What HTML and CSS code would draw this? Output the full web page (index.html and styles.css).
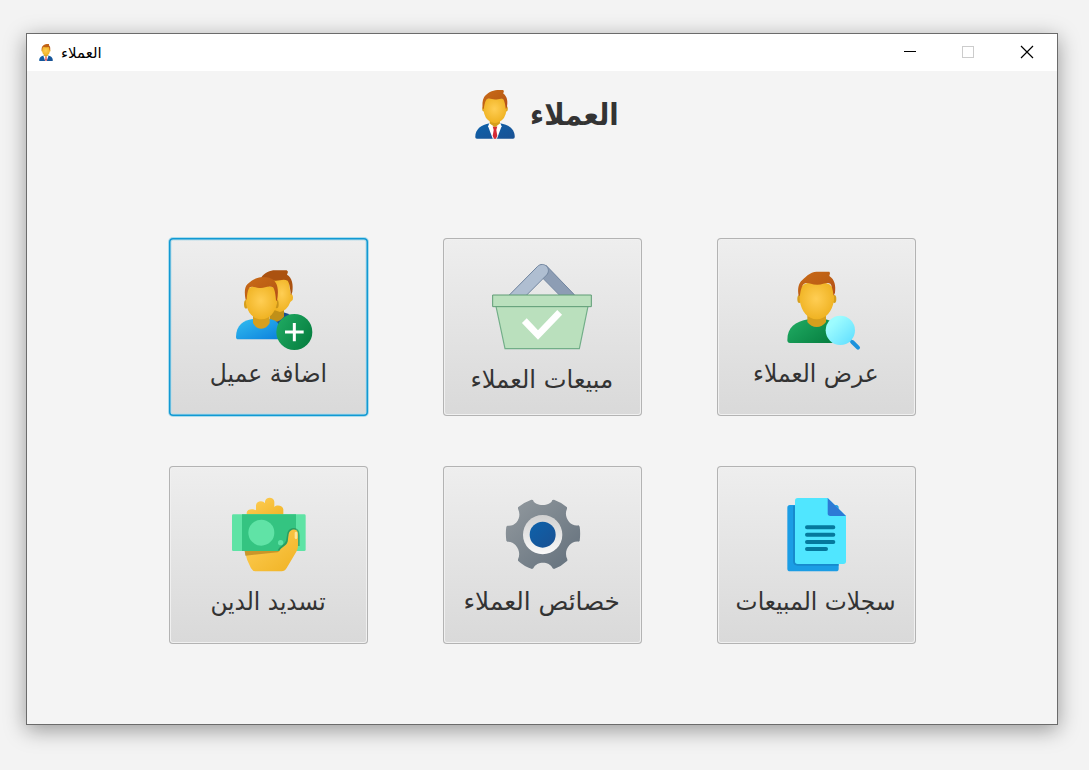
FILE: index.html
```html
<!DOCTYPE html>
<html lang="ar">
<head>
<meta charset="utf-8">
<title>العملاء</title>
<link rel="stylesheet" href="styles.css">
</head>
<body>
<svg class="defs" width="0" height="0">
  <defs>
    <radialGradient id="face" cx=".48" cy=".45" r=".6"><stop offset="0" stop-color="#ffce54"/><stop offset="1" stop-color="#eeb01e"/></radialGradient>
    <linearGradient id="hair" x1="0" y1="0" x2="1" y2="1"><stop offset="0" stop-color="#c96a18"/><stop offset=".55" stop-color="#bd5f14"/><stop offset="1" stop-color="#b34a1a"/></linearGradient>
    <linearGradient id="navy" x1="0" y1="0" x2="1" y2="1"><stop offset="0" stop-color="#0d62ab"/><stop offset="1" stop-color="#1a5193"/></linearGradient>
    <linearGradient id="sky" x1="0" y1="0" x2="1" y2="1"><stop offset="0" stop-color="#33bef0"/><stop offset="1" stop-color="#0a7fdc"/></linearGradient>
    <linearGradient id="green" x1="0" y1="0" x2="1" y2=".6"><stop offset="0" stop-color="#21ad64"/><stop offset="1" stop-color="#088142"/></linearGradient>
    <linearGradient id="lens" x1="0" y1="0" x2="1" y2="1"><stop offset=".25" stop-color="#9dfcff"/><stop offset="1" stop-color="#5cdcff"/></linearGradient>
    <linearGradient id="hand" x1="0" y1="0" x2="1" y2="1"><stop offset="0" stop-color="#ffd05a"/><stop offset="1" stop-color="#f0b222"/></linearGradient>
    <linearGradient id="steel" x1="0" y1="0" x2="1" y2="1"><stop offset="0" stop-color="#939a9f"/><stop offset="1" stop-color="#626f7b"/></linearGradient>
    <linearGradient id="ring" x1="0" y1="0" x2="0" y2="1"><stop offset="0" stop-color="#d0d0d0"/><stop offset="1" stop-color="#fafafa"/></linearGradient>
    <symbol id="businessman" viewBox="45 29 120 149">
      <path fill="url(#navy)" d="M45 172c0-24 17-37 44-42h32c27 5 44 18 44 42q0 5-5 5H50q-5 0-5-5z"/>
      <path fill="#fff" d="M88 129l-4 10 14 38h13l14-38-4-10z"/>
      <path fill="#d52b35" d="M98 140h14l-3 11 3 17-4 9h-6l-4-9 3-17z"/>
      <path fill="#d69f1d" d="M89 115h31v16l-15 11-16-11z"/>
      <ellipse cx="70" cy="86" rx="4" ry="8" fill="#d69f1d"/><ellipse cx="140" cy="86" rx="4" ry="8" fill="#d69f1d"/>
      <path fill="url(#face)" d="M70 70q2-18 35-18t35 18v20q-3 29-24 37-11 4-22 0-21-8-24-37z"/>
      <path fill="url(#hair)" d="M68 86C66 74 66 60 72 50C82 38 96 30 112 29L130 29L132 33L130 40C144 50 144 68 141 82L138 87C137 77 134 62 130 57C122 53 114 58 105 58C96 58 88 52 80 57C75 62 72 76 71 86Z"/>
    </symbol>
  </defs>
</svg>
<main class="window">
  <header class="titlebar">
    <svg class="app-icon"><use href="#businessman"/></svg>
    <span class="app-name" dir="rtl">العملاء</span>
    <svg class="controls" viewBox="0 0 140 18" shape-rendering="crispEdges">
      <path d="M7 8.500h12" stroke="#000"/>
      <rect x="65.500" y="3.500" width="11" height="11" fill="none" stroke="#ccc"/>
      <path d="M124 3l12 12M136 3l-12 12" stroke="#000" stroke-width="1.200" shape-rendering="auto"/>
    </svg>
  </header>
  <div class="heading">
    <svg class="heading-icon"><use href="#businessman"/></svg>
    <h1 class="heading-text" dir="rtl"><span class="fit fit-title">العملاء</span></h1>
  </div>
  <div class="grid">
    <button class="tile tile-focused">
      <svg class="art" viewBox="27 24 597 360">
        <path fill="#174f91" d="M345 247c25-3 43 3 55 16v50h-60z"/>
        <path fill="#c09018" d="M330 235h42v25q-20 24-42 10z"/>
        <path fill="url(#face)" d="M335 145h51l5 45q11 5 7 20l-7 6q-9 25-31 30l-20-7z"/>
        <path fill="#ab5210" d="M303 143C315 128 330 121 345 121L380 121 384 125 381 134C397 143 400 165 397 186L393 196C391 182 389 160 383 152C370 146 358 153 345 152Z"/>
        <path fill="url(#sky)" d="M228 320c1-34 20-50 55-54h42c30 4 40 20 40 62H235q-7 0-7-8z"/>
        <path fill="#d69f1d" d="M279 255h50v24q-9 17-25 17t-25-17z"/>
        <ellipse cx="258" cy="223" rx="6" ry="13" fill="#d69f1d"/><ellipse cx="350" cy="222" rx="6" ry="13" fill="#c8931a"/>
        <path fill="url(#face)" d="M258 190q2-24 46-24t47 24v30c-5 26-21 48-47 48s-42-22-46-48z"/>
        <path fill="url(#hair)" d="M257 210C253 190 253 172 262 163C275 150 290 143 302 142C325 140 342 145 348 160C355 172 355 190 351 213L348 211C347 196 345 180 339 172C325 166 315 174 303 174C288 174 276 166 268 173C262 182 261 196 260 208Z"/>
        <circle cx="403" cy="306" r="54" fill="url(#green)"/><path d="M403 279v55M375 306h56" stroke="#fff" stroke-width="9"/>
      </svg>
      <span class="label" dir="rtl"><span class="fit fit-add">اضافة عميل</span></span>
    </button>
    <button class="tile tile-low">
      <svg class="art" viewBox="24 24 597 360">
        <g stroke="#71859f" stroke-width="3">
          <path fill="#8d9db4" d="M309 130l24-24 84 87v12h-34z"/>
          <path fill="#afbed1" d="M222 196l86-87c8-8 20-7 27 0 7 8 7 18 0 26l-66 66z"/>
        </g>
        <path d="M183 229h276l-26 127H210z" fill="#bae0bd" stroke="#72ae88" stroke-width="3.500"/>
        <path d="M173 195h296v35H173z" fill="#bae0bd" stroke="#5e9c75" stroke-width="3"/>
        <path d="M268 272l41 43 65-68" fill="none" stroke="#fff" stroke-width="20"/>
      </svg>
      <span class="label" dir="rtl"><span class="fit fit-sales">مبيعات العملاء</span></span>
    </button>
    <button class="tile">
      <svg class="art" viewBox="21 24 597 360">
        <path fill="url(#green)" d="M232 330c0-37 23-55 63-62h50c25 5 42 20 42 71H240q-8 0-8-9z"/>
        <path fill="#d69f1d" d="M292 254h56v22q-11 15-28 15t-28-15z"/>
        <ellipse cx="268" cy="207" rx="6" ry="12" fill="#d69f1d"/><ellipse cx="373" cy="207" rx="6" ry="12" fill="#d69f1d"/>
        <path fill="url(#face)" d="M269 184q3-28 51-28t52 28v27c-5 34-25 57-52 57s-46-23-51-57z"/>
        <path fill="url(#hair)" d="M266 197C263 180 264 165 273 154C283 144 300 125 320 125L358 125 360 129 358 138C374 148 378 168 375 188L371 197C369 184 366 167 361 161C350 155 340 164 322 164C300 164 292 154 281 162C274 170 271 186 270 197Z"/>
        <path d="M420 330l5 5" stroke="#4daee7" stroke-width="9"/><path d="M427 336l17 17" stroke="#1b91dc" stroke-width="12" stroke-linecap="round"/>
        <circle cx="391" cy="301" r="44" fill="url(#lens)"/>
      </svg>
      <span class="label" dir="rtl"><span class="fit fit-view">عرض العملاء</span></span>
    </button>
    <button class="tile">
      <svg class="art" viewBox="27 18 597 360">
        <path fill="url(#hand)" d="M260 180V158C261 146 279 145 288 151V136C289 121 310 120 315 130V125C316 109 342 109 343 125V141C351 132 369 137 370 148V180Z"/>
        <path fill="#5fe3a5" d="M220 163h213q4 0 4 4v102q0 4-4 4H220q-4 0-4-4V167q0-4 4-4z"/>
        <path fill="#34c481" d="M246 163h162v110H246z"/>
        <circle cx="304" cy="218" r="39" fill="#60e3a6"/><circle cx="362" cy="248" r="8" fill="#60e3a6"/>
        <path fill="none" stroke="#207b49" stroke-opacity=".55" stroke-width="6" d="M356 272C362 258 378 256 381 243L385 220C388 207 404 203 412 211Q417 216 416 240V258"/>
        <path fill="url(#hand)" d="M254 273H358C363 261 380 258 383 245L386 222C389 205 414 203 414 222V259Q414 267 409 275L380 324Q374 334 365 334H287Q278 334 273 325Q260 302 254 273Z"/>
        <path fill="#b88721" opacity=".75" d="M254 273h104l-5 4-97 10z"/>
        <path stroke="#ffe59a" stroke-width="8" stroke-linecap="round" d="M408 219v14"/>
      </svg>
      <span class="label" dir="rtl"><span class="fit fit-pay">تسديد الدين</span></span>
    </button>
    <button class="tile">
      <svg class="art" viewBox="24 18 597 360">
        <path fill="url(#steel)" d="M249 142q17-15 40-23l5 1c5 20 53 20 58 0l5-1q23 8 39 23v4c-12 25 11 56 35 50l3 4q3 20 0 43l-4 2c-25-3-46 29-33 53v4q-18 17-40 25l-4-2c-10-22-48-22-58 0l-4 2q-24-8-42-25v-4c12-25-8-55-32-53l-3-3q-3-23 0-42l3-3c26 4 45-25 32-51z"/>
        <circle cx="323" cy="224" r="59" fill="url(#ring)"/><circle cx="323" cy="224" r="39" fill="url(#navy)"/>
      </svg>
      <span class="label" dir="rtl"><span class="fit fit-props">خصائص العملاء</span></span>
    </button>
    <button class="tile">
      <svg class="art" viewBox="21 18 597 360">
        <rect x="232" y="135" width="154" height="199" rx="8" fill="#1b9de5"/>
        <path d="M252 137v166q0 11 11 11h123" fill="none" stroke="#167fc0" stroke-width="6" opacity=".65"/>
        <path fill="#50e6ff" d="M263 114h90l55 54v136q0 8-8 8H263q-8 0-8-8V122q0-8 8-8z"/>
        <path fill="#2d7ad5" d="M353 114l55 54h-47q-8 0-8-8z"/>
        <path d="M291 202h79M291 224h79M291 246h79M291 267h57" stroke="#05799d" stroke-width="12" stroke-linecap="round"/>
      </svg>
      <span class="label" dir="rtl"><span class="fit fit-log">سجلات المبيعات</span></span>
    </button>
  </div>
</main>
</body>
</html>
```
FILE: styles.css
```css
* { box-sizing: border-box; }
body { margin: 0; height: 770px; padding: 33px 0 0 26px; background: #f3f3f3; overflow: hidden; font-family: "DejaVu Sans", "Noto Sans", sans-serif; }
.defs { display: block; }
.window { width: 1032px; height: 692px; border: 1px solid #6b6b6b; background: #f4f4f4; box-shadow: 0 5px 20px rgba(0,0,0,.38); }
.titlebar { display: flex; align-items: center; height: 37px; padding-left: 12px; background: #fff; }
.app-icon { width: 14px; height: 17px; }
.app-name { margin-left: 8px; font-size: 15px; color: #000; white-space: nowrap; }
.controls { width: 140px; height: 18px; margin-left: auto; margin-right: 20px; margin-bottom: 2px; }
.heading { display: flex; justify-content: center; height: 167px; padding-top: 19px; padding-left: 9px; gap: 15px; }
.heading-icon { width: 40px; height: 49px; }
.heading-text { display: flex; justify-content: center; width: 88px; margin: 0; font-size: 30px; line-height: 49px; color: #333; }
.grid { display: grid; grid-template-columns: repeat(3, 199px); justify-content: center; gap: 50px 75px; }
.tile { display: flex; flex-direction: column; align-items: center; width: 199px; height: 178px; padding: 0; border: 0; border-radius: 4px; background: linear-gradient(#eee, #d9d9d9); box-shadow: inset 0 0 0 1px #b3b3b3, inset 0 0 0 2px #f0f0f0; }
.tile-focused { box-shadow: inset 0 0 0 1.500px #1199d3, 0 0 0 1px #a9dced, inset 0 0 0 2.500px #b9dce8; }
.art { flex: none; width: 199px; height: 120px; }
.label { flex: none; height: 32px; line-height: 32px; font-family: "DejaVu Sans", "Noto Sans", sans-serif; font-size: 23px; color: #333; white-space: nowrap; }
.tile-low .label { margin-top: 6px; }
.fit { display: inline-block; white-space: nowrap; }
.fit-title { transform: scaleX(.915); }
.fit-add { transform: scale(1.02, 1.06); }
.fit-sales { transform: scale(1.052, 1.06); }
.fit-view { transform: scale(1.015, 1.06); }
.fit-pay { transform: scale(1.01, 1.06); }
.fit-props { transform: scale(1.076, 1.06); }
.fit-log { transform: scale(1.018, 1.06); }
```
